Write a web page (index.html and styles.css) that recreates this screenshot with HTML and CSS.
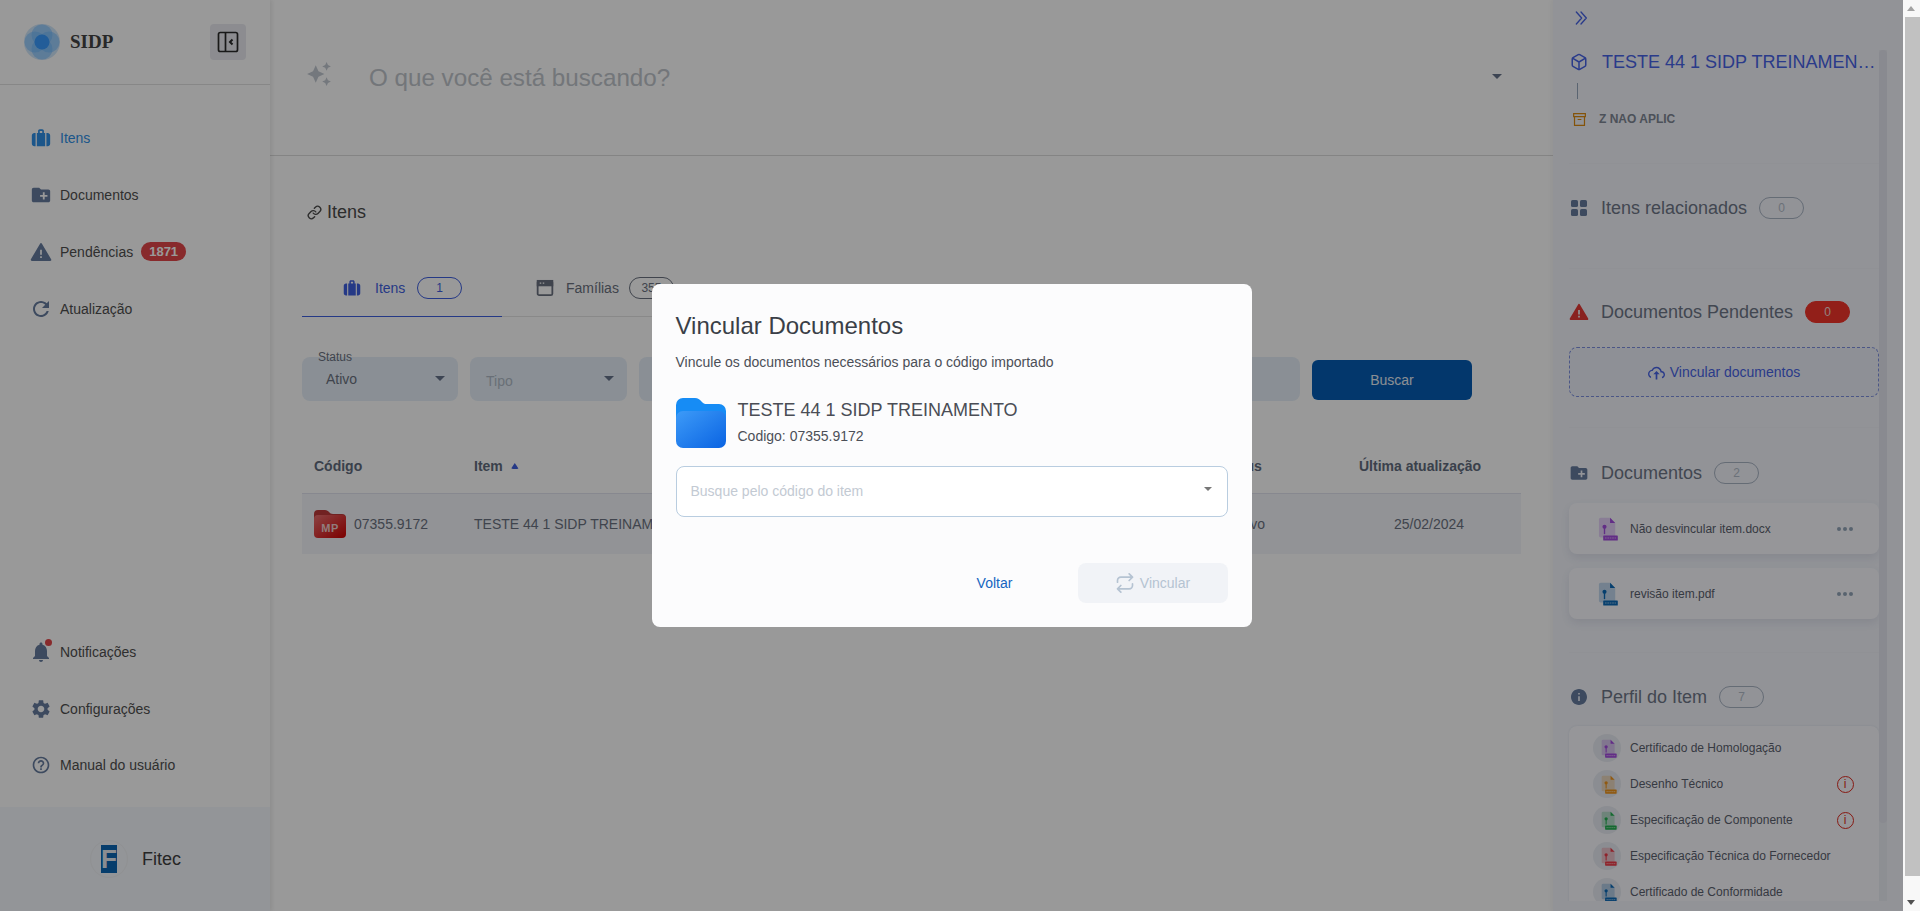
FILE: index.html
```html
<!DOCTYPE html>
<html lang="pt-BR">
<head>
<meta charset="utf-8">
<title>SIDP</title>
<link rel="stylesheet" href="styles.css">
</head>
<body>
<svg class="defs" width="0" height="0" aria-hidden="true">
  <defs>
    <symbol id="i-suitcase" viewBox="0 0 24 24"><path d="M8.5 6V3.5C8.5 2.4 9.4 1.500 10.500 1.500h3c1.100 0 2 .9 2 2V6H17v16H7V6h1.500zm2-2.500V6h3V3.500h-3z" fill-rule="evenodd"/><path d="M5.500 6v16H4c-1.600 0-3-1.300-3-3V9c0-1.700 1.400-3 3-3h1.500zM18.500 6H20c1.600 0 3 1.300 3 3v10c0 1.700-1.400 3-3 3h-1.500V6z"/></symbol>
    <symbol id="i-folder" viewBox="0 0 24 24"><path d="M20 6h-8l-2-2H4c-1.110 0-1.990.89-1.990 2L2 18c0 1.110.89 2 2 2h16c1.110 0 2-.89 2-2V8c0-1.110-.89-2-2-2zm-1 8h-3v3h-2v-3h-3v-2h3V9h2v3h3v2z"/></symbol>
    <symbol id="i-warn" viewBox="0 0 24 24"><path d="M12 3.500L22 20.500H2z" stroke="currentColor" stroke-width="2.400" stroke-linejoin="round"/><path d="M11 9.500h2v5.500h-2zM11 16.500h2v2h-2z" fill="#f4f5f8"/></symbol>
    <symbol id="i-refresh" viewBox="0 0 24 24"><path d="M17.650 6.350C16.200 4.900 14.210 4 12 4c-4.420 0-7.990 3.580-7.990 8s3.570 8 7.990 8c3.730 0 6.840-2.550 7.730-6h-2.080c-.82 2.330-3.040 4-5.650 4-3.310 0-6-2.690-6-6s2.690-6 6-6c1.660 0 3.140.69 4.220 1.780L13 11h7V4l-2.350 2.350z"/></symbol>
    <symbol id="i-bell" viewBox="0 0 24 24"><path d="M12 22c1.100 0 2-.9 2-2h-4c0 1.100.9 2 2 2zm6-6v-5c0-3.070-1.630-5.640-4.500-6.320V4c0-.83-.67-1.500-1.500-1.500s-1.500.67-1.500 1.500v.68C7.640 5.360 6 7.920 6 11v5l-2 2v1h16v-1l-2-2z"/></symbol>
    <symbol id="i-gear" viewBox="0 0 24 24"><path d="M19.140 12.940c.04-.3.06-.61.06-.94 0-.32-.02-.64-.07-.94l2.030-1.580c.18-.14.23-.41.12-.61l-1.920-3.320c-.12-.22-.37-.29-.59-.22l-2.390.96c-.5-.38-1.030-.7-1.620-.94l-.36-2.540c-.04-.24-.24-.41-.48-.41h-3.840c-.24 0-.43.17-.47.41l-.36 2.540c-.59.24-1.130.57-1.620.94l-2.390-.96c-.22-.08-.47 0-.59.22L2.740 8.870c-.12.21-.08.47.12.61l2.030 1.580c-.05.3-.09.63-.09.94s.02.64.07.94l-2.030 1.580c-.18.14-.23.41-.12.61l1.920 3.320c.12.22.37.29.59.22l2.390-.96c.5.38 1.030.7 1.620.94l.36 2.540c.05.24.24.41.48.41h3.840c.24 0 .44-.17.47-.41l.36-2.540c.59-.24 1.130-.56 1.620-.94l2.390.96c.22.08.47 0 .59-.22l1.920-3.320c.12-.22.07-.47-.12-.61l-2.010-1.580zM12 15.600c-1.980 0-3.600-1.620-3.600-3.600s1.620-3.600 3.600-3.600 3.600 1.620 3.600 3.600-1.620 3.600-3.600 3.600z"/></symbol>
    <symbol id="i-help" viewBox="0 0 24 24"><path d="M11 18h2v-2h-2v2zm1-16C6.480 2 2 6.480 2 12s4.480 10 10 10 10-4.480 10-10S17.520 2 12 2zm0 18c-4.410 0-8-3.590-8-8s3.590-8 8-8 8 3.590 8 8-3.590 8-8 8zm0-14c-2.210 0-4 1.790-4 4h2c0-1.100.9-2 2-2s2 .9 2 2c0 2-3 1.750-3 5h2c0-2.250 3-2.500 3-5 0-2.210-1.790-4-4-4z"/></symbol>
    <symbol id="i-file" viewBox="0 0 24 28"><path d="M2 3a2 2 0 0 1 2-2h11l6 6v15a2 2 0 0 1-2 2H4a2 2 0 0 1-2-2z" opacity=".24"/><path d="M15 1l6 6h-6z"/><path d="M8.500 20v-7" stroke="currentColor" stroke-width="1.600" fill="none"/><circle cx="8.500" cy="11.500" r="2.400"/><rect x="7" y="21.500" width="17" height="6" rx=".8"/><path d="M9 24.500h13" stroke="#fff" stroke-width="1.400" stroke-dasharray="2 .8" opacity=".55"/></symbol>
  </defs>
</svg>

<div class="window">
  <div class="page">
    <aside class="sidebar">
      <div class="brand">
        <div class="brand-left">
          <svg class="logo" viewBox="0 0 36 36">
            <circle cx="18" cy="18" r="18" fill="#cfe6fb"/>
            <circle cx="18" cy="11" r="10.500" fill="#6ab8ff" opacity=".5"/>
            <circle cx="18" cy="25" r="10.500" fill="#6ab8ff" opacity=".5"/>
            <circle cx="11" cy="18" r="10.500" fill="#6ab8ff" opacity=".5"/>
            <circle cx="25" cy="18" r="10.500" fill="#6ab8ff" opacity=".5"/>
            <circle cx="18" cy="18" r="7.500" fill="#3a9cff"/>
          </svg>
          <span class="brand-name">SIDP</span>
        </div>
        <button class="toggle" type="button" aria-label="Recolher">
          <svg viewBox="0 0 24 24" width="24" height="24" fill="none" stroke="#2a2a2a" stroke-width="1.700"><rect x="2.500" y="2.500" width="19" height="19" rx="1.800"/><path d="M9.500 2.500v19"/><path d="M16.500 9.500L14 12l2.500 2.500" stroke-width="2"/></svg>
        </button>
      </div>
      <nav class="nav">
        <a class="nav-item is-active"><svg class="nav-icon"><use href="#i-suitcase"/></svg><span>Itens</span></a>
        <a class="nav-item"><svg class="nav-icon ic-22"><use href="#i-folder"/></svg><span>Documentos</span></a>
        <a class="nav-item"><svg class="nav-icon ic-22"><use href="#i-warn"/></svg><span>Pendências</span><b class="nav-badge">1871</b></a>
        <a class="nav-item"><svg class="nav-icon ic-24"><use href="#i-refresh"/></svg><span>Atualização</span></a>
      </nav>
      <nav class="nav nav-bottom">
        <a class="nav-item"><span class="bell"><svg class="nav-icon ic-24"><use href="#i-bell"/></svg><i class="bell-dot"></i></span><span>Notificações</span></a>
        <a class="nav-item"><svg class="nav-icon ic-22"><use href="#i-gear"/></svg><span>Configurações</span></a>
        <a class="nav-item nav-item-last"><svg class="nav-icon"><use href="#i-help"/></svg><span>Manual do usuário</span></a>
      </nav>
      <div class="company">
        <span class="company-logo"><span class="company-f">F</span></span>
        <span class="company-name">Fitec</span>
      </div>
    </aside>

    <main class="main">
      <header class="search">
        <svg class="search-icon" viewBox="0 0 24 24"><path d="M19 9l1.250-2.750L23 5l-2.750-1.250L19 1l-1.250 2.750L15 5l2.750 1.250L19 9zm-7.500.5L9 4 6.500 9.500 1 12l5.500 2.500L9 20l2.500-5.500L17 12l-5.500-2.500zM19 15l-1.250 2.750L15 19l2.750 1.250L19 23l1.250-2.750L23 19l-2.750-1.250L19 15z"/></svg>
        <span class="search-text">O que você está buscando?</span>
        <i class="caret caret-dark"></i>
      </header>
      <section class="content">
        <h1 class="page-title">
          <svg viewBox="0 0 24 24" width="15" height="15" fill="none" stroke="currentColor" stroke-width="2.200" stroke-linecap="round"><path d="M10 13a5 5 0 0 0 7.540.54l3-3a5 5 0 0 0-7.070-7.070l-1.720 1.710"/><path d="M14 11a5 5 0 0 0-7.540-.54l-3 3a5 5 0 0 0 7.070 7.070l1.710-1.710"/></svg>
          <span>Itens</span>
        </h1>
        <div class="tabs">
          <div class="tab is-active"><svg class="tab-icon"><use href="#i-suitcase"/></svg><span>Itens</span><span class="pill">1</span></div>
          <div class="tab tab-second">
            <svg class="tab-icon" viewBox="0 0 24 24" stroke="currentColor" stroke-width="2.400"><rect x="2.200" y="2.500" width="19.600" height="19" rx="2" fill="none"/><rect x="2.200" y="2.500" width="19.600" height="6" fill="currentColor"/><path d="M5 5.500h2M9 5.500h2" stroke="#fff" stroke-width="1.500"/></svg>
            <span>Famílias</span><span class="pill">355</span>
          </div>
        </div>
        <div class="filters">
          <div class="field field-status"><span class="field-label">Status</span><span class="field-value">Ativo</span><i class="caret caret-dark"></i></div>
          <div class="field field-type"><span class="field-hint">Tipo</span><i class="caret caret-dark"></i></div>
          <div class="field field-wide"></div>
          <button class="btn-search" type="button">Buscar</button>
        </div>
        <div class="table">
          <div class="t-row t-head">
            <span>Código</span>
            <span class="t-item">Item <i class="sort"></i></span>
            <span>Status</span>
            <span>Última atualização</span>
          </div>
          <div class="t-row t-body">
            <span class="t-code">
              <span class="mp-icon">
                <svg class="mp-folder" viewBox="0 0 32 28">
                  <defs><linearGradient id="mg" x1="0" y1="0" x2="1" y2="1"><stop offset="0" stop-color="#e87070"/><stop offset="1" stop-color="#d00000"/></linearGradient></defs>
                  <path d="M0 4a4 4 0 0 1 4-4h7c2 0 3 1 4 2s2 2 4 2h9a4 4 0 0 1 4 4v6H0z" fill="#bd3a3a"/>
                  <rect y="5" width="32" height="23" rx="4" fill="url(#mg)"/>
                </svg>
                <span class="mp-label">MP</span>
              </span>07355.9172
            </span>
            <span>TESTE 44 1 SIDP TREINAMENTO</span>
            <span class="t-status">Ativo</span>
            <span class="t-date">25/02/2024</span>
          </div>
        </div>
      </section>
    </main>

    <aside class="panel">
      <div class="panel-top">
        <svg viewBox="0 0 24 24" width="16" height="16" fill="none" stroke="currentColor" stroke-width="2" stroke-linecap="round" stroke-linejoin="round"><path d="M5 3l8 9-8 9M12 3l8 9-8 9"/></svg>
      </div>
      <div class="panel-scroll">
        <span class="panel-track"></span>
        <div class="panel-inner">
          <section class="p-sec p-title">
            <div class="item-title">
              <svg viewBox="0 0 24 24" width="18" height="18" fill="none" stroke="currentColor" stroke-width="2" stroke-linejoin="round"><path d="M21 16V8a2 2 0 0 0-1-1.730l-7-4a2 2 0 0 0-2 0l-7 4A2 2 0 0 0 3 8v8a2 2 0 0 0 1 1.730l7 4a2 2 0 0 0 2 0l7-4A2 2 0 0 0 21 16z"/><path d="M3.270 6.960L12 12.010l8.730-5.050M12 22.080V12"/></svg>
              <span class="item-name">TESTE 44 1 SIDP TREINAMEN…</span>
            </div>
            <i class="connector"></i>
            <div class="item-family">
              <svg viewBox="0 0 12 12" width="13" height="13" fill="none" stroke="#dc8a10" stroke-width="1.100"><path d="M.6.6h10.800v2.800H.6zM1.400 3.400v8h9.200v-8M4.300 6h3.400"/></svg>
              <span>Z NAO APLIC</span>
            </div>
          </section>

          <section class="p-sec p-related">
            <div class="sec-head">
              <svg class="sec-icon" viewBox="0 0 16 16"><rect width="7" height="7" rx="1.600"/><rect x="9" width="7" height="7" rx="1.600"/><rect y="9" width="7" height="7" rx="1.600"/><rect x="9" y="9" width="7" height="7" rx="1.600"/></svg>
              <span>Itens relacionados</span><span class="pill pill-muted">0</span>
            </div>
          </section>

          <section class="p-sec p-pending">
            <div class="sec-head">
              <svg class="sec-icon sec-icon-red"><use href="#i-warn"/></svg>
              <span>Documentos Pendentes</span><span class="pill pill-red">0</span>
            </div>
            <div class="dropzone">
              <svg viewBox="0 0 24 24" width="17" height="17" fill="currentColor"><path d="M19.350 10.040C18.670 6.590 15.640 4 12 4 9.110 4 6.600 5.640 5.350 8.040 2.340 8.360 0 10.910 0 14c0 2.700 1.800 5 4.300 5.700v-2.200C3 16.900 2 15.600 2 14c0-2.050 1.530-3.760 3.560-3.970l1.070-.11.5-.95C8.080 7.140 9.940 6 12 6c2.620 0 4.880 1.860 5.390 4.430l.3 1.500 1.530.11c1.560.1 2.780 1.410 2.780 2.960 0 1.400-1 2.600-2.300 2.900v2.100c2.400-.3 4.300-2.500 4.300-5 0-2.640-2.050-4.780-4.650-4.960z"/><path d="M12 10l-4.500 4.500h3.300V22h2.400v-7.500h3.300z"/></svg>
              <span>Vincular documentos</span>
            </div>
          </section>

          <section class="p-sec p-docs">
            <div class="sec-head">
              <svg class="sec-icon sec-icon-wide"><use href="#i-folder"/></svg>
              <span>Documentos</span><span class="pill pill-muted">2</span>
            </div>
            <div class="doc-list">
              <div class="doc-card">
                <svg class="file-icon c-purple"><use href="#i-file"/></svg>
                <span class="doc-name">Não desvincular item.docx</span>
                <span class="dots"><i></i><i></i><i></i></span>
              </div>
              <div class="doc-card">
                <svg class="file-icon c-blue"><use href="#i-file"/></svg>
                <span class="doc-name">revisão item.pdf</span>
                <span class="dots"><i></i><i></i><i></i></span>
              </div>
            </div>
          </section>

          <section class="p-sec p-profile">
            <div class="sec-head">
              <svg class="sec-icon" viewBox="2 2 20 20"><path d="M12 2C6.480 2 2 6.480 2 12s4.480 10 10 10 10-4.480 10-10S17.520 2 12 2zm1 15h-2v-6h2v6zm0-8h-2V7h2v2z"/></svg>
              <span>Perfil do Item</span><span class="pill pill-muted">7</span>
            </div>
            <div class="profile-card">
              <div class="profile-row"><span class="file-bubble"><svg class="file-icon c-purple"><use href="#i-file"/></svg></span><span class="doc-name">Certificado de Homologação</span></div>
              <div class="profile-row"><span class="file-bubble"><svg class="file-icon c-orange"><use href="#i-file"/></svg></span><span class="doc-name">Desenho Técnico</span><span class="alert">i</span></div>
              <div class="profile-row"><span class="file-bubble"><svg class="file-icon c-green"><use href="#i-file"/></svg></span><span class="doc-name">Especificação de Componente</span><span class="alert">i</span></div>
              <div class="profile-row"><span class="file-bubble"><svg class="file-icon c-red"><use href="#i-file"/></svg></span><span class="doc-name">Especificação Técnica do Fornecedor</span></div>
              <div class="profile-row"><span class="file-bubble"><svg class="file-icon c-blue"><use href="#i-file"/></svg></span><span class="doc-name">Certificado de Conformidade</span></div>
            </div>
          </section>
        </div>
      </div>
    </aside>

    <div class="overlay">
      <div class="modal">
        <h2 class="modal-title">Vincular Documentos</h2>
        <p class="modal-sub">Vincule os documentos necessários para o código importado</p>
        <div class="modal-item">
          <svg class="big-folder" viewBox="0 0 50 50">
            <defs><linearGradient id="fg" x1="0" y1="0" x2="1" y2="1"><stop offset="0" stop-color="#3d9bf8"/><stop offset="1" stop-color="#0a63e2"/></linearGradient></defs>
            <path d="M0 7a7 7 0 0 1 7-7h12c3 0 4.500 1.500 6.500 3.500S28 6 31 6h12a7 7 0 0 1 7 7v10H0z" fill="#168cf5"/>
            <rect y="13" width="50" height="37" rx="7" fill="url(#fg)"/>
          </svg>
          <div class="modal-item-text">
            <div class="modal-item-name">TESTE 44 1 SIDP TREINAMENTO</div>
            <div class="modal-item-code">Codigo: 07355.9172</div>
          </div>
        </div>
        <div class="combo"><span>Busque pelo código do item</span><i class="caret caret-grey"></i></div>
        <div class="modal-actions">
          <button class="btn-text" type="button">Voltar</button>
          <button class="btn-disabled" type="button">
            <svg viewBox="0 0 24 24" width="20" height="20" fill="none" stroke="currentColor" stroke-width="2" stroke-linecap="round" stroke-linejoin="round"><path d="M17 1l4 4-4 4M3 11V9a4 4 0 0 1 4-4h14M7 23l-4-4 4-4M21 13v2a4 4 0 0 1-4 4H3"/></svg>
            <span>Vincular</span>
          </button>
        </div>
      </div>
    </div>
  </div>

  <div class="scrollbar">
    <i class="sb-up"></i>
    <div class="sb-thumb"></div>
    <i class="sb-down"></i>
  </div>
</div>
</body>
</html>
```

FILE: styles.css
```css
* { box-sizing: border-box; }
html, body { margin: 0; height: 100%; overflow: hidden; }
body { font-family: "Liberation Sans", Arial, sans-serif; font-size: 14px; color: #4b4b4b; background: #fff; }
.defs { position: absolute; }
i { display: block; }
button { font-family: inherit; border: 0; cursor: pointer; }

.window { display: flex; width: 1920px; height: 911px; }
.page { position: relative; display: flex; width: 1903px; height: 911px; background: #fff; overflow: hidden; }

.caret { width: 0; height: 0; border-left: 5px solid transparent; border-right: 5px solid transparent; border-top: 5px solid; }
.caret-dark { border-top-color: #66738a; }
.caret-grey { border-top-color: #777; }

/* Sidebar */
.sidebar { width: 270px; flex: none; display: flex; flex-direction: column; box-shadow: 2px 0 4px rgba(0,0,0,.08); position: relative; z-index: 1; background: #fff; }
.brand { height: 85px; flex: none; border-bottom: 1px solid #e2e2e2; display: flex; align-items: center; justify-content: space-between; padding: 0 24px 1px 24px; }
.brand-left { display: flex; align-items: center; gap: 10px; }
.logo { width: 36px; height: 36px; }
.brand-name { font-family: "Liberation Serif", serif; font-weight: 700; font-size: 19px; color: #444; }
.toggle { width: 36px; height: 36px; padding: 0; background: #e9eaf0; border-radius: 4px; display: flex; align-items: center; justify-content: center; }

.nav { display: flex; flex-direction: column; padding-top: 24px; }
.nav-bottom { margin-top: auto; padding: 0 0 14px; }
.nav-item { height: 57px; display: flex; align-items: center; padding-left: 31px; color: #4f4f4f; font-size: 14px; }
.nav-item-last { height: 56px; }
.nav-icon { width: 20px; height: 20px; fill: #667c9f; color: #667c9f; margin-right: 9px; flex: none; }
.nav-icon.ic-22 { width: 22px; height: 22px; margin: 0 8px 0 -1px; }
.nav-icon.ic-24 { width: 24px; height: 24px; margin: 0 7px 0 -2px; }
.nav-item.is-active { color: #2f8fe6; }
.nav-item.is-active .nav-icon { fill: #2f8fe6; }
.nav-badge { margin-left: 8px; background: #e3474a; color: #fff; font-size: 13px; line-height: 19px; height: 19px; padding: 0 8px; border-radius: 10px; }
.bell { position: relative; display: flex; }
.bell-dot { position: absolute; top: -1px; left: 14px; width: 7px; height: 7px; border-radius: 50%; background: #e3474a; }
.company { height: 104px; flex: none; background: #f5f8fd; display: flex; align-items: center; padding-left: 90px; gap: 14px; }
.company-logo { width: 38px; height: 38px; border-radius: 50%; border: 1px solid #f0f2f5; display: flex; align-items: center; justify-content: center; }
.company-f { width: 16px; height: 28px; background: #0a66b4; color: #e6ecf2; font-weight: 700; font-size: 26px; line-height: 28px; text-align: center; }
.company-name { font-size: 18px; color: #3f3f3f; }

/* Main */
.main { flex: 1; min-width: 0; display: flex; flex-direction: column; }
.search { height: 156px; flex: none; border-bottom: 1px solid #dcdcdc; display: flex; align-items: center; padding: 0 51px 3px 36px; }
.search-icon { width: 26px; height: 26px; fill: #c2c8d1; margin-right: 37px; flex: none; margin-top: -4px; }
.search-text { flex: 1; font-size: 24.200px; color: #c0c5cb; padding-top: 3px; }
.content { padding: 45px 32px 0; }
.page-title { margin: 0; height: 22px; display: flex; align-items: center; gap: 5px; font-size: 18px; font-weight: 400; color: #4b4b4b; padding-left: 5px; }
.tabs { display: flex; margin-top: 37px; width: 420px; height: 57px; border-bottom: 1px solid #e4e4e4; }
.tab { display: flex; align-items: center; height: 57px; padding: 0 40px 1px 41px; color: #6b7280; gap: 14px; width: 200px; }
.tab.is-active { color: #3f5fe0; border-bottom: 1px solid #3f5fe0; }
.tab-second { padding-left: 34px; width: 220px; gap: 12px; }
.tab-icon { width: 18px; height: 18px; fill: currentColor; flex: none; }
.pill { display: inline-flex; align-items: center; justify-content: center; width: 45px; height: 22px; border: 1px solid currentColor; border-radius: 11px; font-size: 12px; }
.tab .pill { margin-left: -2px; }

.filters { display: flex; align-items: center; gap: 12px; margin-top: 40px; }
.field { position: relative; height: 44px; background: #e6eff9; border-radius: 8px; display: flex; align-items: center; justify-content: space-between; padding: 0 13px 2px 24px; flex: none; }
.field-status { width: 156px; }
.field-type { width: 157px; padding-left: 16px; }
.field-wide { width: 661px; }
.field-label { position: absolute; left: 16px; top: -7px; font-size: 12px; color: #6b7280; }
.field-value { font-size: 14px; color: #6b7280; padding-top: 2px; }
.field-hint { font-size: 14px; color: #b0bac6; padding-top: 6px; }
.btn-search { width: 160px; height: 40px; margin-top: 2px; background: #055db5; color: #e8eef6; font-size: 14px; border-radius: 6px; }

.table { margin-top: 40px; }
.t-row { display: grid; grid-template-columns: 160px 745px 140px 1fr; padding: 0 12px; align-items: center; }
.t-head { height: 53px; border-bottom: 1px solid #e1e3ee; font-weight: 700; color: #626c7e; font-size: 14px; padding-bottom: 2px; }
.t-item { display: flex; align-items: center; gap: 8px; }
.sort { width: 8px; height: 6px; background: #3f5fe0; clip-path: polygon(50% 0, 100% 100%, 0 100%); border-radius: 2px; }
.t-body { height: 60px; background: #f3f5fb; color: #6b7280; font-size: 14px; }
.t-code { display: flex; align-items: center; gap: 8px; }
.mp-icon { position: relative; width: 32px; height: 28px; display: flex; align-items: flex-end; justify-content: center; }
.mp-folder { position: absolute; inset: 0; width: 32px; height: 28px; }
.mp-label { position: relative; color: #f0cfcf; font-weight: 700; font-size: 11px; line-height: 20px; letter-spacing: .4px; }
.t-status { padding-left: 15px; }
.t-date { padding-left: 35px; }

/* Right panel */
.panel { width: 350px; flex: none; background: #f3f5fc; display: flex; flex-direction: column; box-shadow: -2px 0 4px rgba(0,0,0,.04); }
.panel-top { height: 50px; flex: none; padding: 10px 0 0 20px; color: #4763e6; }
.panel-scroll { position: relative; width: 334px; height: 851px; overflow: hidden; }
.panel-track { position: absolute; right: 0; top: 0; width: 8px; height: 100%; background: #eceef6; }
.panel-track::before { content: ""; display: block; height: 773px; background: #e5e7f0; border-radius: 4px; }
.panel-inner { padding: 0 8px 0 16px; }
.p-sec { border-bottom: 1px solid #f0f2f9; }
.p-title { height: 114px; }
.item-title { display: flex; align-items: center; gap: 14px; height: 24px; color: #4763e6; padding-left: 1px; }
.item-title svg { flex: none; }
.item-name { font-size: 18px; flex: 1; min-width: 0; white-space: nowrap; color: #4763e6; }
.connector { width: 1px; height: 16px; background: #97a7bd; margin: 9px 0 0 8px; }
.item-family { display: flex; align-items: center; gap: 13px; margin-top: 13px; padding-left: 4px; font-size: 12px; font-weight: 700; color: #7f8794; }
.sec-head { display: flex; align-items: center; height: 24px; font-size: 18px; color: #6f7788; }
.sec-icon { width: 16px; height: 16px; fill: #667c9f; color: #667c9f; margin: 0 14px 0 2px; flex: none; }
.sec-icon-red { width: 20px; height: 20px; fill: #e53935; color: #e53935; margin: 0 12px 0 0; }
.sec-icon-wide { width: 20px; height: 20px; margin: 0 12px 0 0; }
.sec-head .pill { margin-left: 12px; }
.pill-muted { color: #b3bdca; border-color: #a9b4c4; }
.pill-red { background: #f3342a; border-color: #f3342a; color: #f5d7d5; }
.p-related { height: 105px; padding-top: 32px; }
.p-pending { padding: 31px 0 30px; }
.dropzone { height: 50px; margin-top: 23px; border: 1px dashed #7d8fe0; border-radius: 8px; background: #edf1fa; display: flex; align-items: center; justify-content: center; gap: 5px; color: #4763e6; }
.p-docs { padding: 33px 0 33px; }
.doc-list { display: flex; flex-direction: column; gap: 14px; margin-top: 18px; }
.doc-card { height: 51px; background: #fafbff; border-radius: 8px; display: flex; align-items: center; padding: 0 26px 0 28px; box-shadow: 0 4px 8px rgba(60,70,110,.1); }
.doc-name { font-size: 12px; color: #5a616e; white-space: nowrap; flex: 1; }
.file-icon { width: 21px; height: 24px; flex: none; fill: currentColor; }
.doc-card .file-icon { margin-right: 12px; }
.c-purple { color: #a44be0; }
.c-blue { color: #0b6ab8; }
.c-orange { color: #f0951c; }
.c-green { color: #22b050; }
.c-red { color: #ee3a48; }
.dots { display: flex; gap: 2px; }
.dots i { width: 4px; height: 4px; border-radius: 50%; background: #93a5ba; }
.p-profile { padding-top: 32px; border-bottom: 0; }
.profile-card { margin-top: 17px; background: #fafbff; border-radius: 8px; padding: 4px 26px 4px 24px; box-shadow: 0 0 2px rgba(60,70,110,.12); }
.profile-row { height: 36px; display: flex; align-items: center; }
.file-bubble { width: 28px; height: 28px; border-radius: 50%; background: #e8ebf3; display: flex; align-items: center; justify-content: center; margin-right: 9px; flex: none; }
.file-bubble .file-icon { width: 17px; height: 19px; margin-left: 2px; }
.alert { width: 17px; height: 17px; margin-right: -.5px; border: 1.500px solid #e02a20; border-radius: 50%; color: #e02a20; font-size: 12px; line-height: 14px; text-align: center; flex: none; }

/* Overlay + modal */
.overlay { position: absolute; inset: 0; z-index: 5; background: rgba(0,0,0,.4); display: flex; align-items: center; justify-content: center; }
.modal { width: 600px; height: 343px; background: #fcfcfd; border-radius: 8px; padding: 24px; display: flex; flex-direction: column; }
.modal-title { margin: 0; font-size: 24px; font-weight: 400; line-height: 36px; color: #3a3f47; }
.modal-sub { margin: 10px 0 0; font-size: 14px; line-height: 16px; color: #4b4f57; }
.modal-item { display: flex; align-items: center; gap: 12px; margin-top: 28px; }
.big-folder { width: 50px; height: 50px; flex: none; }
.modal-item-text { padding-bottom: 3px; }
.modal-item-name { font-size: 18px; line-height: 22px; color: #4a4d55; }
.modal-item-code { font-size: 14px; line-height: 16px; margin-top: 7px; color: #4b4f57; }
.combo { height: 51px; margin-top: 18px; border: 1px solid #b9cde0; border-radius: 8px; background: #fff; display: flex; align-items: center; justify-content: space-between; padding: 0 15px 1px 14px; color: #c3cad3; font-size: 14px; }
.combo .caret { margin-top: -4px; border-left-width: 4.500px; border-right-width: 4.500px; border-top-width: 4.500px; }
.modal-actions { display: flex; justify-content: flex-end; align-items: center; margin-top: auto; }
.btn-text { background: none; color: #1565c0; font-size: 14px; width: 150px; height: 40px; margin-right: 8px; }
.btn-disabled { width: 150px; height: 40px; background: #f1f3f7; border-radius: 8px; color: #b5c3d2; font-size: 14px; display: flex; align-items: center; justify-content: center; gap: 5px; }

/* Window scrollbar */
.scrollbar { width: 17px; flex: none; display: flex; flex-direction: column; background: #f8f8f8; position: relative; }
.sb-up, .sb-down { height: 17px; flex: none; position: relative; }
.sb-up::before, .sb-down::before { content: ""; position: absolute; left: 4px; top: 6px; border-left: 4px solid transparent; border-right: 4px solid transparent; }
.sb-up::before { border-bottom: 5px solid #a3a3a3; }
.sb-down::before { border-top: 5px solid #505050; }
.sb-thumb { height: 859px; margin-left: 2px; background: #c1c1c1; }
.sb-down { margin-top: auto; }
```
